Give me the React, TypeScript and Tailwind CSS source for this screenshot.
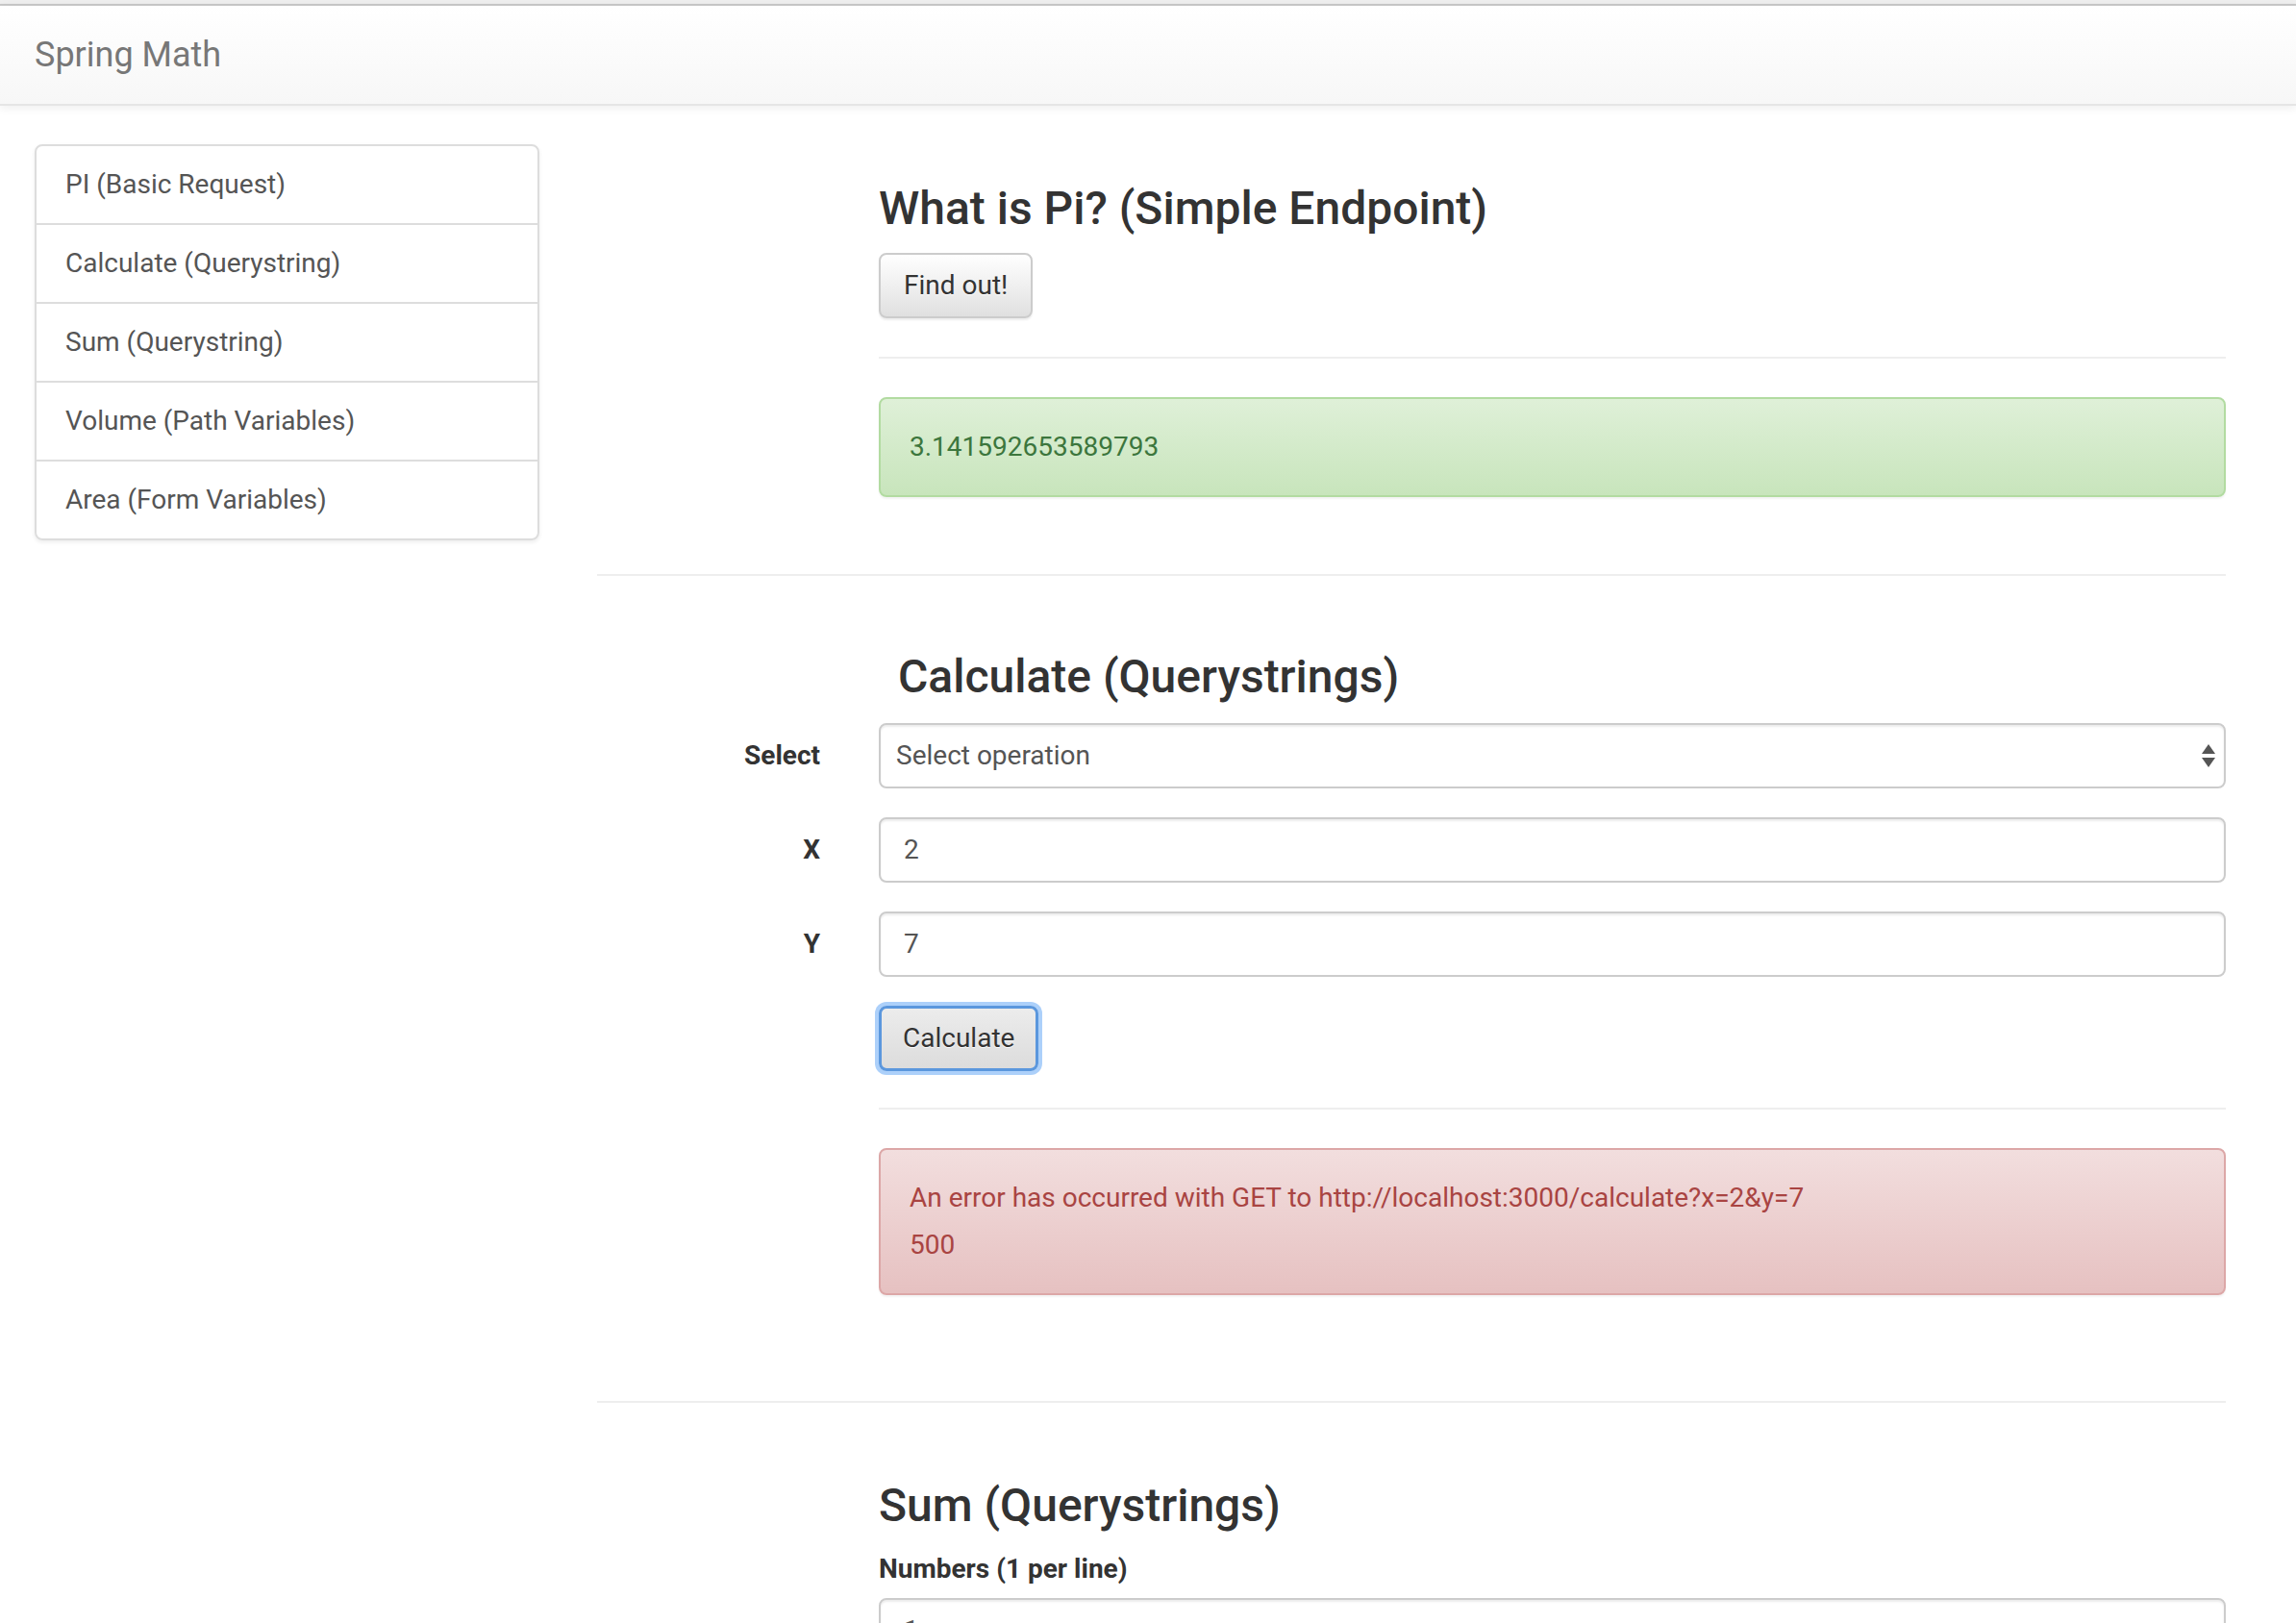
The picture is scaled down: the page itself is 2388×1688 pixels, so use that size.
import React from "react";

const links = [
  "PI (Basic Request)",
  "Calculate (Querystring)",
  "Sum (Querystring)",
  "Volume (Path Variables)",
  "Area (Form Variables)",
];

function SelectArrows() {
  return (
    <svg width="16" height="28" viewBox="0 0 16 28" className="shrink-0">
      <path d="M8 2 L15 12 L1 12 Z" fill="#555" />
      <path d="M8 26 L15 16 L1 16 Z" fill="#555" />
    </svg>
  );
}

function Row({ label, children }: { label: string; children: React.ReactNode }) {
  return (
    <div className="flex items-center">
      <div className="w-[232px] text-right font-bold text-[#333]">{label}</div>
      <div className="ml-[61px] flex-1">{children}</div>
    </div>
  );
}

const inputCls =
  "h-[68px] w-full rounded-[8px] border-2 border-[#ccc] bg-white px-[24px] flex items-center text-[#555] shadow-[inset_0_2px_2px_rgba(0,0,0,0.075)]";

export default function App() {
  return (
    <div className="min-h-screen bg-white font-['Roboto','Liberation_Sans',sans-serif] text-[28px] leading-[40px] text-[#333]">
      <div className="h-[6px] bg-[#efefef] border-b-2 border-[#c9c9c9]" />
      <nav className="h-[104px] flex items-center px-9 bg-gradient-to-b from-white to-[#f7f7f7] border-b-2 border-[#e5e5e5] shadow-[0_2px_10px_rgba(0,0,0,0.075)]">
        <span className="text-[36px] text-[#777]">Spring Math</span>
      </nav>

      <div className="flex pt-[40px]">
        <aside className="ml-9 w-[525px] shrink-0">
          <ul className="rounded-[8px] border-2 border-[#ddd] shadow-[0_2px_4px_rgba(0,0,0,0.075)]">
            {links.map((l, i) => (
              <li
                key={l}
                className={`flex items-center px-[30px] text-[#555] ${
                  i > 0 ? "h-[82px] border-t-2 border-[#ddd]" : "h-[80px]"
                }`}
              >
                {l}
              </li>
            ))}
          </ul>
        </aside>

        <main className="ml-[60px] w-[1694px]">
          {/* pi */}
          <section className="pl-[293px]">
            <h3 className="mt-[40px] text-[48px] leading-[53px] font-medium text-[#333]">
              What is Pi? (Simple Endpoint)
            </h3>
            <button className="mt-[20px] h-[68px] px-[24px] rounded-[8px] border-2 border-[#ccc] bg-gradient-to-b from-white to-[#e0e0e0] text-[#333] [text-shadow:0_1px_0_#fff] shadow-[0_2px_2px_rgba(0,0,0,0.075)]">
              Find out!
            </button>
            <hr className="mt-[40px] border-t-2 border-[#eee]" />
            <div className="mt-[40px] h-[104px] rounded-[8px] border-2 border-[#b2dba1] bg-gradient-to-b from-[#dff0d8] to-[#c8e5bc] px-[30px] flex items-center text-[#3c763d] shadow-[0_2px_2px_rgba(0,0,0,0.05)]">
              3.141592653589793
            </div>
          </section>

          <hr className="mt-[80px] border-t-2 border-[#eee]" />

          {/* calculate */}
          <section>
            <h3 className="mt-[78px] pl-[313px] text-[48px] leading-[53px] font-medium text-[#333]">
              Calculate (Querystrings)
            </h3>
            <div className="mt-[22px] flex flex-col gap-[30px]">
              <Row label="Select">
                <div className={`${inputCls} justify-between pl-[16px] pr-[8px]`}>
                  <span>Select operation</span>
                  <SelectArrows />
                </div>
              </Row>
              <Row label="X">
                <div className={inputCls}>2</div>
              </Row>
              <Row label="Y">
                <div className={inputCls}>7</div>
              </Row>
            </div>
            <div className="pl-[293px]">
              <button className="mt-[30px] h-[68px] px-[22px] rounded-[8px] border-[3px] border-[#5b97dd] bg-gradient-to-b from-[#ececec] to-[#dcdcdc] text-[#333] [text-shadow:0_1px_0_#fff] shadow-[0_0_0_4px_#acd0fa]">
                Calculate
              </button>
              <hr className="mt-[38px] border-t-2 border-[#eee]" />
              <div className="mt-[40px] rounded-[8px] border-2 border-[#dca7a7] bg-gradient-to-b from-[#f2dede] to-[#e6c1c1] px-[30px] py-[30px] text-[#a94442] shadow-[0_2px_2px_rgba(0,0,0,0.05)]">
                <div>An error has occurred with GET to http://localhost:3000/calculate?x=2&amp;y=7</div>
                <div className="mt-[9px]">500</div>
              </div>
            </div>
          </section>

          <hr className="mt-[110px] border-t-2 border-[#eee]" />

          {/* sum */}
          <section className="pl-[293px]">
            <h3 className="mt-[80px] text-[48px] leading-[53px] font-medium text-[#333]">
              Sum (Querystrings)
            </h3>
            <div className="mt-[20px] font-bold text-[#333]">Numbers (1 per line)</div>
            <div className="mt-[10px] h-[200px] rounded-[8px] border-2 border-[#ccc] px-[24px] py-[12px] text-[#555] shadow-[inset_0_2px_2px_rgba(0,0,0,0.075)]">
              1
            </div>
          </section>
        </main>
      </div>
    </div>
  );
}
